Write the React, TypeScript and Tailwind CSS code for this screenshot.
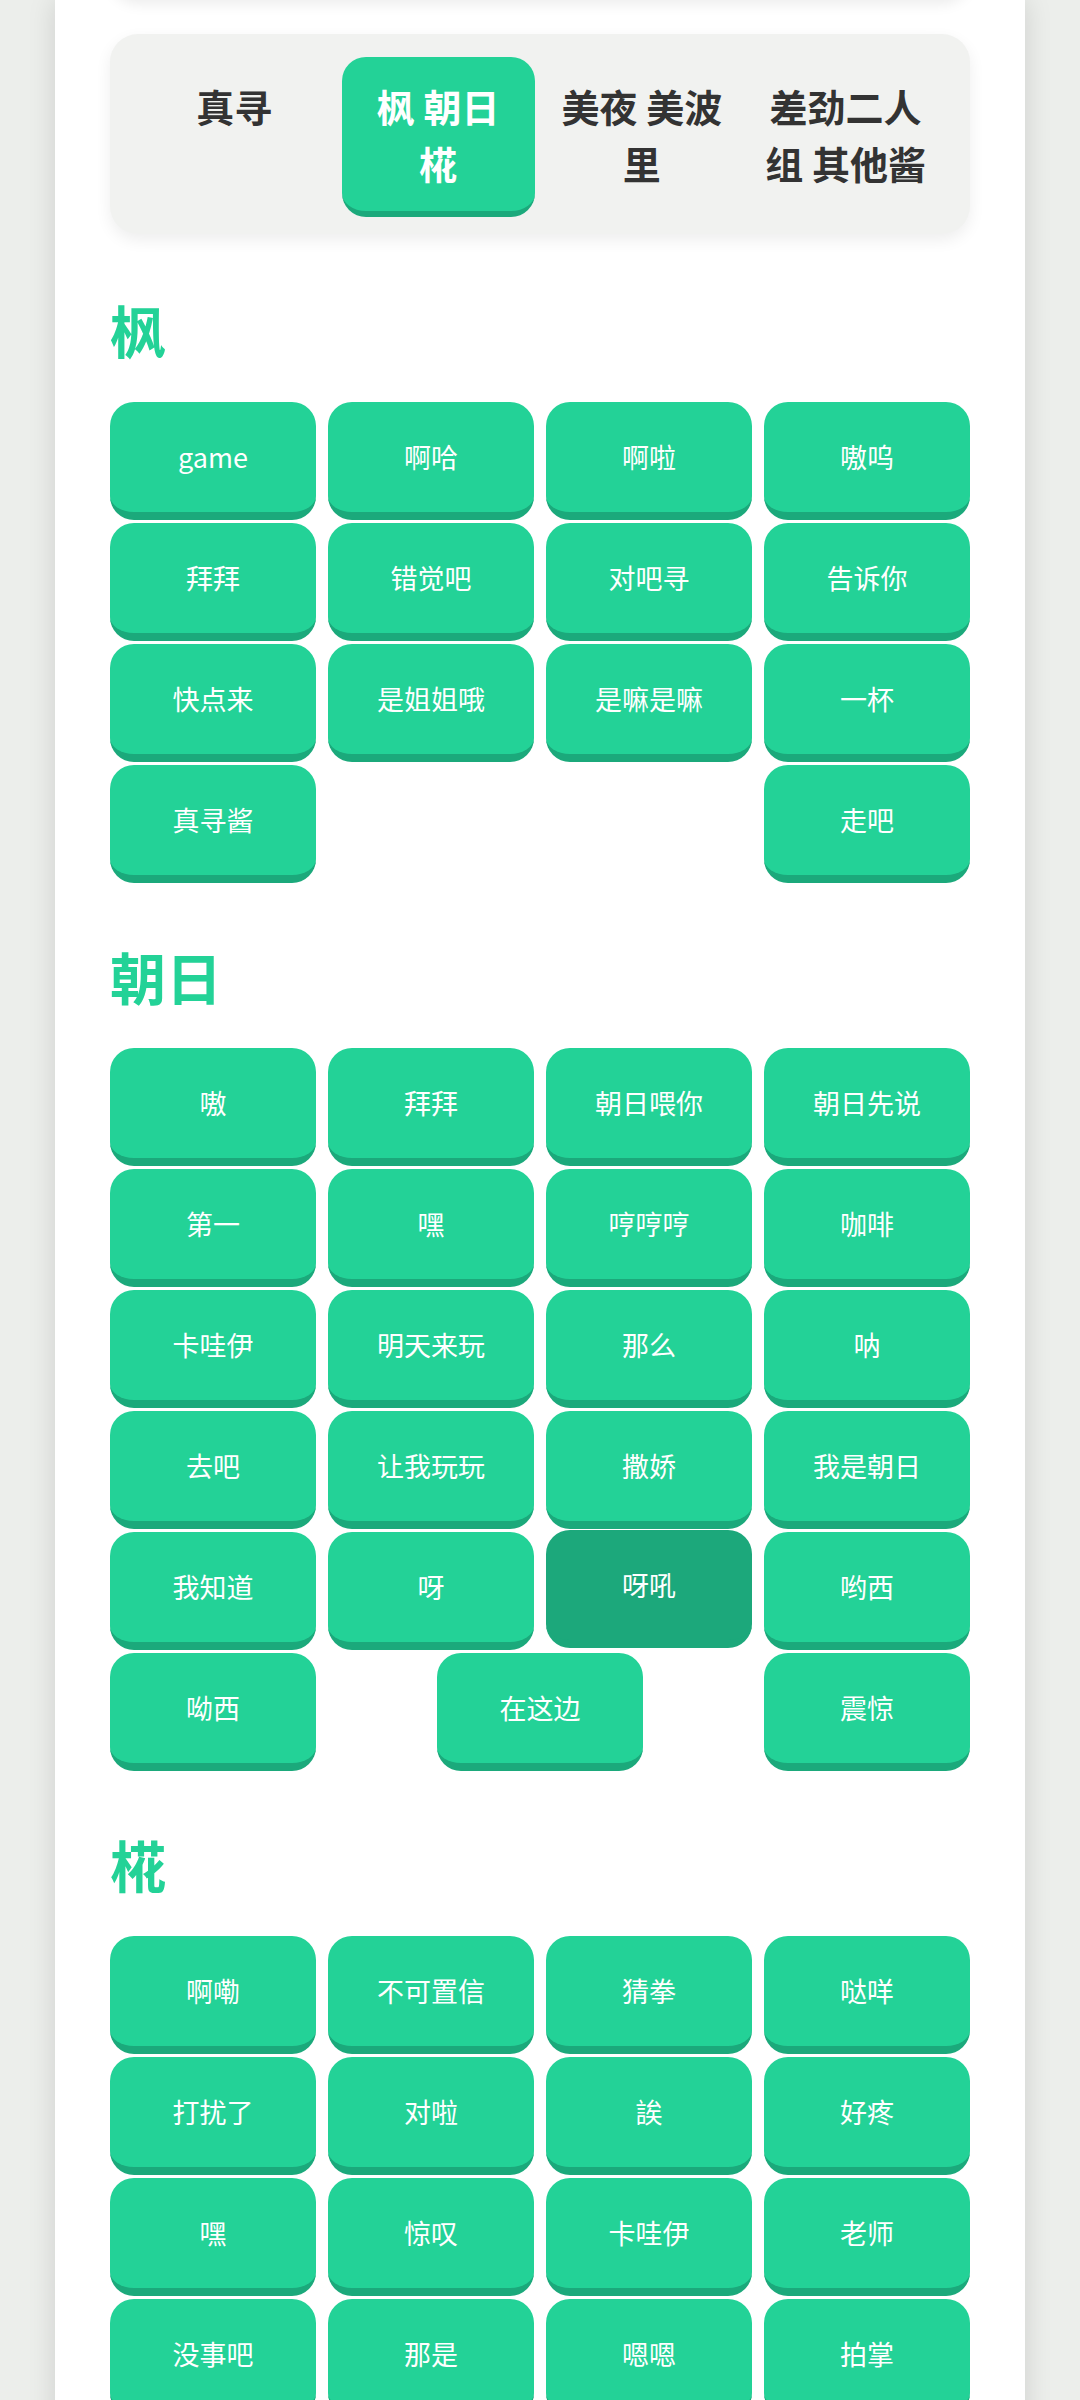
import { useState } from "react";

const sections: { title: string; items: string[] }[] = [
  {
    title: "枫",
    items: [
      "game", "啊哈", "啊啦", "嗷呜",
      "拜拜", "错觉吧", "对吧寻", "告诉你",
      "快点来", "是姐姐哦", "是嘛是嘛", "一杯",
      "真寻酱", "走吧",
    ],
  },
  {
    title: "朝日",
    items: [
      "嗷", "拜拜", "朝日喂你", "朝日先说",
      "第一", "嘿", "哼哼哼", "咖啡",
      "卡哇伊", "明天来玩", "那么", "呐",
      "去吧", "让我玩玩", "撒娇", "我是朝日",
      "我知道", "呀", "呀吼", "哟西",
      "呦西", "在这边", "震惊",
    ],
  },
  {
    title: "椛",
    items: [
      "啊嘞", "不可置信", "猜拳", "哒咩",
      "打扰了", "对啦", "誒", "好疼",
      "嘿", "惊叹", "卡哇伊", "老师",
      "没事吧", "那是", "嗯嗯", "拍掌",
      "天哪", "我来了", "呜呜", "真的吗",
    ],
  },
];

const tabs = ["真寻", "枫 朝日 椛", "美夜 美波里", "差劲二人组 其他酱"];

function VoiceButton({ label, pressed }: { label: string; pressed?: boolean }) {
  return (
    <button
      className={
        pressed
          ? "w-[206px] h-[118px] rounded-[24px] bg-[#1ca87b] border-b-[8px] border-[#1ca87b] -translate-y-[2px] flex items-center justify-center text-white text-[27px]"
          : "w-[206px] h-[118px] rounded-[24px] bg-[#23d297] border-b-[8px] border-[#1ba97b] flex items-center justify-center text-white text-[27px]"
      }
    >
      {label}
    </button>
  );
}

export default function App() {
  const [active, setActive] = useState(1);

  return (
    <div className="min-h-[2400px] bg-[#eceeeb] font-['Noto_Sans_CJK_SC','Noto_Sans',sans-serif] overflow-hidden">
      <div className="mx-[55px] min-h-[2400px] bg-white px-[55px] pb-[60px] flex flex-col shadow-[0_0_26px_rgba(0,0,0,0.13)]">
        {/* card above, only its shadow shows */}
        <div className="-mt-[120px] h-[120px] rounded-[28px] bg-white shadow-[0_4px_14px_rgba(0,0,0,0.08)]" />

        {/* character tabs */}
        <div className="mt-[34px] grid grid-cols-4 gap-[11px] px-[28px] pt-[23px] pb-[17px] bg-[#f1f2f0] rounded-[28px] shadow-[0_6px_16px_rgba(0,0,0,0.07)]">
          {tabs.map((t, i) => (
            <button
              key={t}
              onClick={() => setActive(i)}
              className={
                i === active
                  ? "self-start px-[14px] py-[20px] rounded-[24px] bg-[#23d297] border-b-[6px] border-[#1ba97b] text-white text-[38px] leading-normal font-bold text-center"
                  : "self-start px-[14px] py-[20px] rounded-[24px] border-b-[6px] border-transparent text-[#333333] text-[38px] leading-normal font-bold text-center"
              }
            >
              {t}
            </button>
          ))}
        </div>

        {sections.map((s, si) => (
          <div key={s.title}>
            <h2
              className={
                si === 0
                  ? "mt-[67px] mb-[45px] text-[56px] leading-none font-bold text-[#23d297]"
                  : "mt-[65px] mb-[44px] text-[56px] leading-none font-bold text-[#23d297]"
              }
            >
              {s.title}
            </h2>
            <div className="flex flex-wrap justify-between gap-y-[3px]">
              {s.items.map((it, idx) => (
                <VoiceButton
                  key={it + idx}
                  label={it}
                  pressed={s.title === "朝日" && it === "呀吼"}
                />
              ))}
            </div>
          </div>
        ))}
      </div>
    </div>
  );
}
